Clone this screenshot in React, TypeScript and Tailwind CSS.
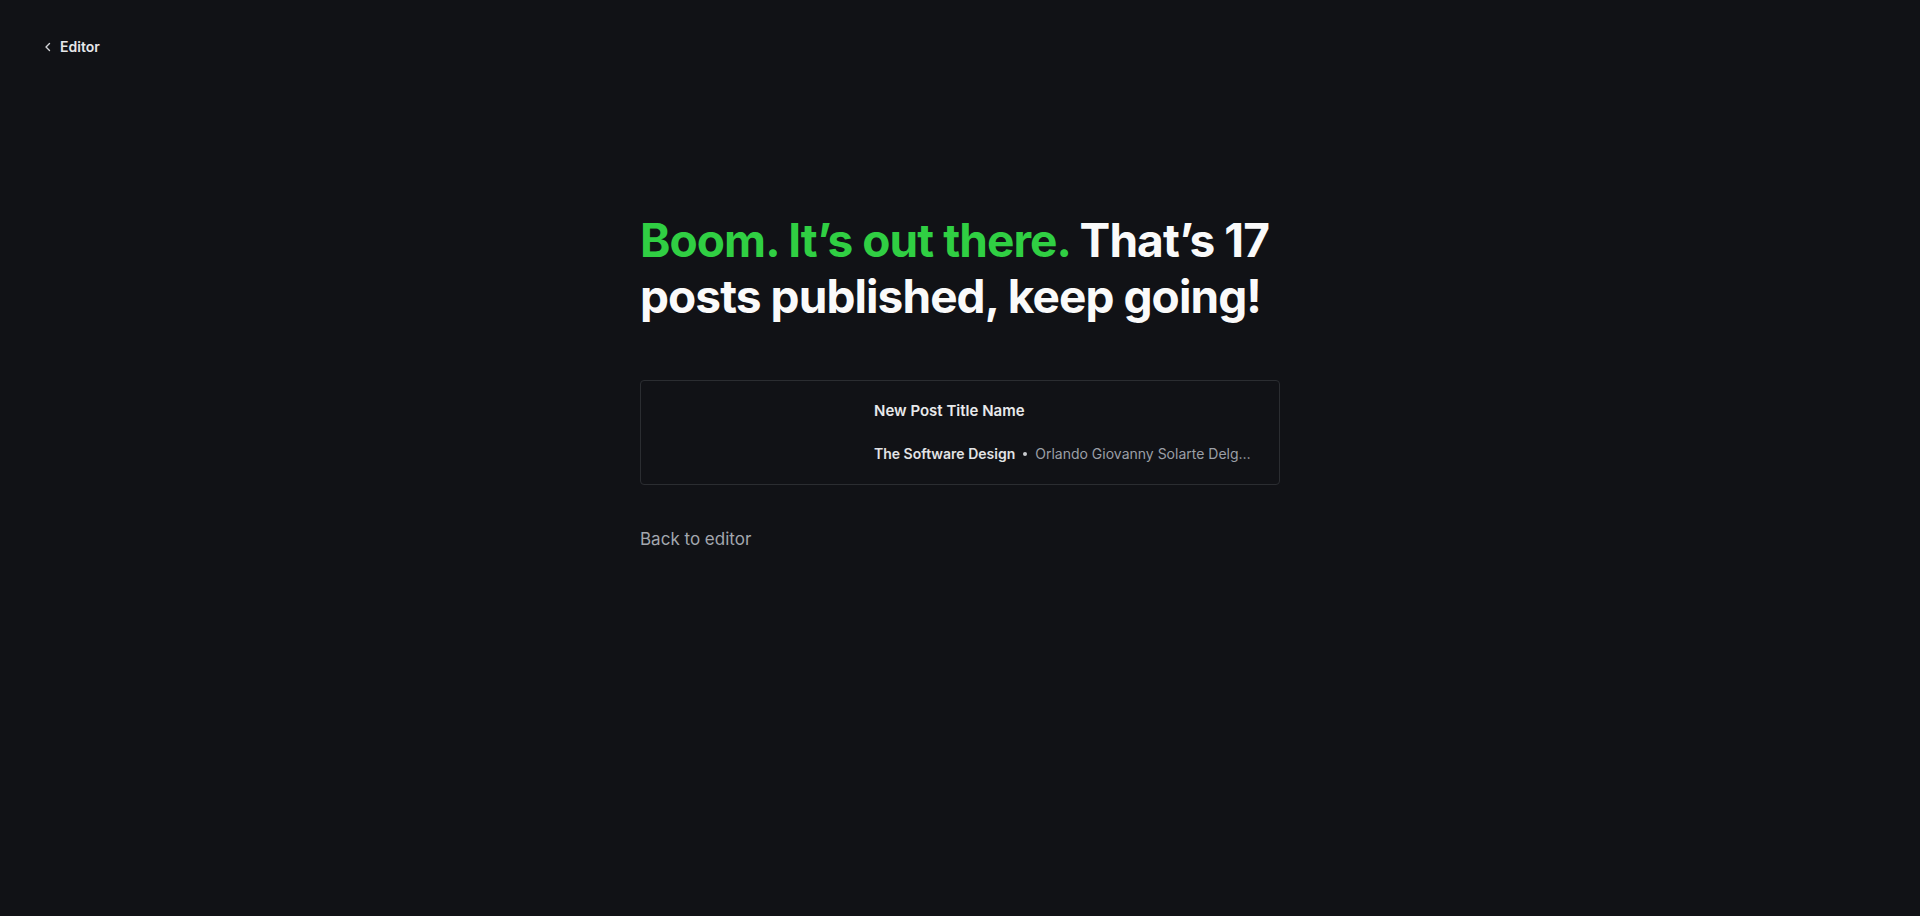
import React from "react";

export default function App() {
  return (
    <div
      className="min-h-screen w-full bg-[#111216] text-white"
      style={{ fontFamily: "Inter, 'Noto Sans', sans-serif" }}
    >
      <div className="flex items-center h-[92px] px-[44px]">
        <a className="flex items-center gap-[8px] text-[14px] font-semibold text-[#e6e7e9]">
          <svg width="8" height="10" viewBox="0 0 8 10" fill="none" className="mt-[1px]">
            <path d="M5.5 1.5L2 5l3.5 3.5" stroke="#d4d5d8" strokeWidth="1.4" strokeLinecap="round" strokeLinejoin="round" />
          </svg>
          <span>Editor</span>
        </a>
      </div>
      <div className="mx-auto w-[640px] pt-[120px]">
        <h1 className="text-[46px] font-bold leading-[56px] tracking-[-0.02em] text-[#fafafa]">
          <span className="text-[#30cf43]">Boom. It’s out there.</span> That’s 17 posts published, keep going!
        </h1>
        <div className="mt-[56px] flex h-[105px] rounded-[4px] border border-[#2b2d31]">
          <div className="w-[213px] shrink-0" />
          <div className="flex min-w-0 flex-1 flex-col justify-between py-[19px] pl-[20px] pr-[27px]">
            <div className="text-[15px] font-semibold leading-[22px] text-[#e8e9eb]">New Post Title Name</div>
            <div className="flex min-w-0 items-center text-[14px] leading-[22px]">
              <span className="shrink-0 font-semibold text-[#e2e3e5]">The Software Design</span>
              <span className="mx-[8px] h-[4px] w-[4px] shrink-0 rounded-full bg-[#c9cbcf]" />
              <span className="truncate text-[#9b9fa6]">Orlando Giovanny Solarte Delgado</span>
            </div>
          </div>
        </div>
        <div className="mt-[42px] text-[17px] leading-[24px] text-[#a3a7ae]">Back to editor</div>
      </div>
    </div>
  );
}
